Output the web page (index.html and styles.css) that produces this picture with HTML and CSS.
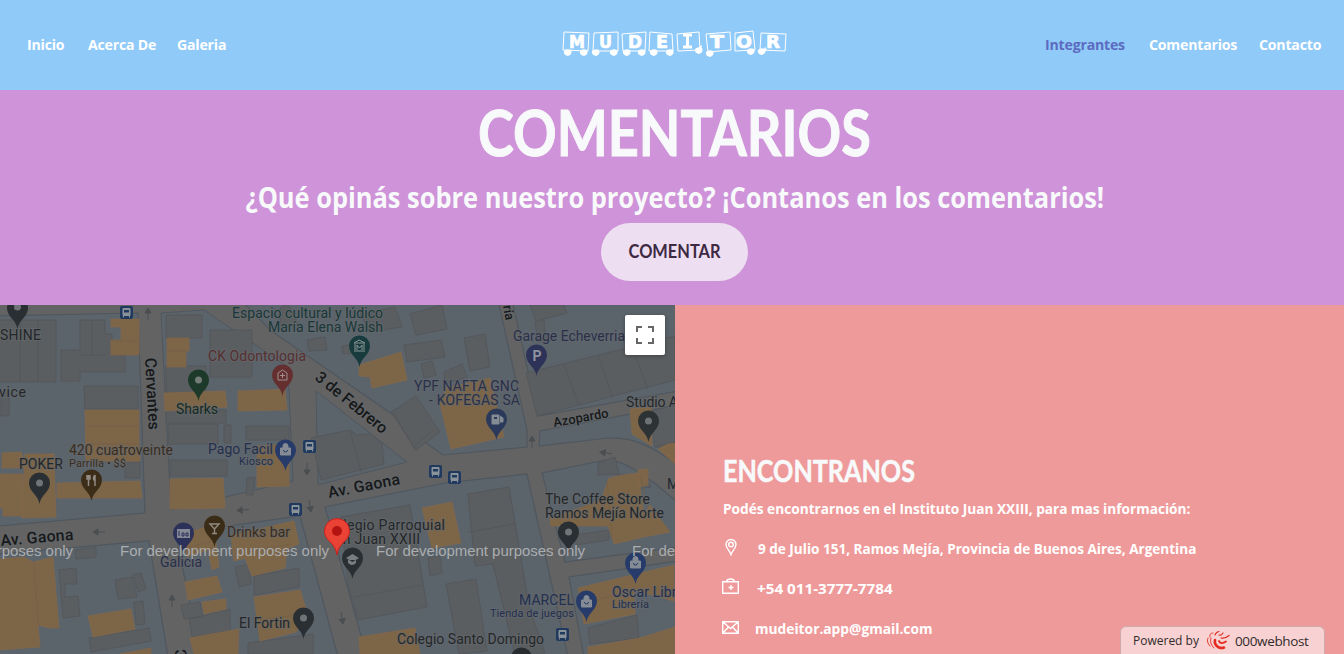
FILE: index.html
```html
<!DOCTYPE html>
<html lang="es">
<head>
<meta charset="utf-8">
<title>Mudeitor</title>
<link rel="stylesheet" href="styles.css">
</head>
<body>
<header class="header">
  <nav class="nav"><a class="w-inicio">Inicio</a><a class="w-acerca">Acerca De</a><a class="w-galeria">Galeria</a></nav>
  <svg class="logo" width="226" height="30" viewBox="562 28 226 30" fill="none" stroke="#fff">
    <path d="M564 32L589 33L588 51L563 50ZM594 33L618 32L618 51L593 51ZM622 34L646 32L645 51L623 51ZM650 32L672 34L673 51L649 51ZM677 34L699 32L700 50L678 51ZM706 34L730 32L731 50L708 52ZM735 33L753 31L755 50L735 51ZM761 33L786 34L785 51L760 50Z"/>
    <g fill="#fff" stroke="none">
      <path id="wheel" d="M564 51Q567 48 571 50Q573 54 568 56Q563 55 564 51Z"/>
      <use href="#wheel" x="16"/><use href="#wheel" x="28"/><use href="#wheel" x="46"/><use href="#wheel" x="59"/><use href="#wheel" x="74"/><use href="#wheel" x="86"/><use href="#wheel" x="102"/><use href="#wheel" x="131" y="-2"/><use href="#wheel" x="142" y="1"/><use href="#wheel" x="183" y="-1"/><use href="#wheel" x="194" y="-1"/>
      <path d="M699 47L702 45L701 50ZM763 51L765 47L767 50Z"/>
    </g>
    <g class="logo-letters">
      <text x="569" y="48" textLength="16" lengthAdjust="spacingAndGlyphs">M</text><text x="599" y="48" textLength="13" lengthAdjust="spacingAndGlyphs">U</text><text x="628" y="48" textLength="14" lengthAdjust="spacingAndGlyphs">D</text><text x="656" y="48" textLength="12" lengthAdjust="spacingAndGlyphs">E</text>
      <path d="M683 35H692M683 47H692M687.500 35V47" stroke-width="3"/>
      <text x="710" y="48" textLength="14" lengthAdjust="spacingAndGlyphs">T</text><text x="736" y="48" textLength="16" lengthAdjust="spacingAndGlyphs">O</text><text x="766" y="48" textLength="14" lengthAdjust="spacingAndGlyphs">R</text>
    </g>
  </svg>
  <nav class="nav nav-right"><a class="active w-integrantes">Integrantes</a><a class="w-comentarios">Comentarios</a><a class="w-contacto">Contacto</a></nav>
</header>

<section class="comments">
  <h1><span>COMENTARIOS</span></h1>
  <h2><span>¿Qué opinás sobre nuestro proyecto? ¡Contanos en los comentarios!</span></h2>
  <button class="comment-button"><span>COMENTAR</span></button>
</section>

<main class="location">
  <div class="map">
    <svg width="675" height="349" viewBox="0 305 675 349">
      <defs>
        <path id="pin" d="M.5 21C-.5 12-10 9-10 0A10.300 10.300 0 0 1 11 0C11 9 1.500 12 .5 21Z"/>
        <g id="bus"><rect x="-6.500" y="-6.500" width="13" height="13" rx="2" fill="#20395f"/><path d="M-3.500-4H3.500V3H-3.500ZM-3 3V5M3 3V5" fill="#899199" stroke="#899199"/><path d="M-2.500-2.500H2.500V0H-2.500Z" fill="#20395f"/></g>
        <path id="arrow" d="M0 6V-1M-3-1H3L0-6Z" fill="#4b4e51" stroke="#4b4e51"/>
        <g id="bag"><path d="M-5-1H5V6H-5ZM-2.500-1V-3A2.500 2.500 0 0 1 2.500-3V-1" fill="#858b94" stroke="#858b94" stroke-width="1"/><path d="M-2 1A2 2 0 0 0 2 1" fill="none" stroke="#263b69"/></g>
      </defs>
      <rect y="305" width="675" height="349" fill="#5b636b"/>
      <g class="road">
        <path d="M-2 302H243L270 330L392 414L425 442L443 455L527 447L527 430L498 300H512L538 416L678 391V405L540 431L539 446L608 438Q642 436 678 466V503Q628 458 605 460L542 473L565 562L678 547V561L569 577L584 657H568L527 474L445 483L325 507L367 657H338L300 516L220 527L176 536L201 657H168L149 541L-2 554V526L145 513L138 313L-2 316Z"/>
      </g>
      <g class="land">
        <path d="M161 313L204 310L288 367L293 481L171 510ZM316 391L407 462L318 485ZM678 448Q665 441 655 434L678 439Z"/>
      </g>
      <g class="gray">
        <path d="M-1 320H56V382H-1ZM20 320V382M38 320V382M61 350H80V320H105V334H112V355H125V372H80V381H61ZM80 355H105M92 320V354M84 386H138V409H85ZM1 393H9V416H1ZM166 315H202V338H166ZM166 366H206V393H166ZM210 330H252V377H210ZM166 410H226V423H166ZM168 424H218V444H169ZM170 460H227V476H170ZM224 425H231V443H224ZM246 426H289V440H246ZM125 462H140V478H125Z"/>
        <path d="M307 340L325 337L327 350L309 351ZM342 346L354 344L356 353L343 354ZM280 308L288 304L298 324L280 329ZM360 314L395 307L402 327L370 332ZM410 314L442 305L447 329L416 335ZM404 345L441 340L445 357L407 362ZM421 364L432 361L436 375L424 378ZM464 338L485 334L490 367L470 371ZM444 372L462 364L467 377L445 384ZM391 412L416 396L440 432L416 450ZM415 446L434 429M394 413L415 450M311 438L350 430L357 435L370 434L382 443L384 464L321 480ZM350 430L361 472M530 305H564L567 313L536 321ZM535 322L544 320L546 340L538 342ZM526 373L675 336V380L537 416ZM564 364L579 406M598 356L613 398M632 347L648 389M650 412L675 405V447L655 447Z"/>
        <path d="M468 494L509 487L529 606L545 653H525L514 651L493 564L475 566ZM469 532L515 524M341 517L410 505L427 607L358 620L348 585ZM354 597L422 585M446 584L476 579L487 651L459 654ZM575 535L609 530V540L576 545ZM598 463L615 457L619 474L598 475ZM655 447L675 442M617 475L645 474L651 487L619 491ZM75 550L96 547V557L76 559ZM59 570L76 568L77 584H65V597L78 596L80 616L63 618ZM115 580L132 577L137 597L118 599ZM133 575L141 573L146 589L138 592ZM134 602L143 601L145 624L136 625ZM89 638L149 628L151 641L91 652ZM181 605L200 602L203 617L184 619ZM189 619L230 609V631L192 637ZM254 576L299 568V587L254 595ZM248 643L313 634V654H248ZM588 628L637 615L639 638L590 644ZM247 478L255 477L253 495L246 495ZM235 567L249 564L251 584L239 587ZM428 558L440 556L442 573L430 576Z"/>
      </g>
      <g class="orange">
        <path d="M111 319H139V355H111V340H121V327H111ZM167 338H189V351H186V367H167ZM164 393L225 391L227 407L165 411ZM85 410H139V461H86ZM238 391L285 389L287 410L238 411ZM359 365L401 352L407 380L372 388L370 377L359 376ZM2 453L21 452L24 459L54 454V468H2ZM0 474H23V516H3V508H0ZM25 454H54L56 517L22 518ZM57 483L140 481L142 498H57ZM125 454H140V461H125ZM170 479L223 478L225 508L170 509ZM257 446L289 444L289 486L257 487ZM0 559L24 557L33 562L53 557L59 628H49L38 625L40 647L0 650ZM88 616L131 609L135 629L93 637ZM185 582L217 576L222 592L188 600ZM184 534L203 528L214 526L219 567L212 570L208 550L187 557ZM202 602L226 599V609L204 614ZM190 638L239 629L238 654H194ZM231 535L294 521L299 544L287 549L285 568L252 576L245 558L234 561ZM254 597L300 590L308 615L296 632L260 641ZM120 654L151 648V654ZM446 388L490 378L504 437L451 449L440 404ZM668 444L675 443V464L658 449ZM630 409L651 407L652 446L632 434ZM638 470L648 469V485L638 487ZM422 508L452 502L461 543L432 548ZM550 519L601 500L609 478L623 475L638 473L644 514L650 505L670 532L644 537L614 544L608 526L551 526ZM578 588L674 565V601L634 590L635 614L584 624ZM588 647L640 638L675 627V654H588ZM359 637L415 628L420 654H360ZM660 448L675 446V461Z"/>
        <path class="seams" d="M112 341H139M167 351H187M86 426H139M86 444H139M190 547L216 540M241 553L291 544M259 620L303 614M34 562L38 625M607 481L612 540M640 475L648 507M583 604L629 591"/>
      </g>
      <g class="labels">
        <text x="0" y="340" textLength="41">SHINE</text><text x="-1" y="397" textLength="27">vice</text>
        <text x="176" y="414" textLength="42" fill="#152b22">Sharks</text>
        <g fill="#1a3837"><text x="232" y="318" textLength="151">Espacio cultural y lúdico</text><text x="268" y="332" textLength="115">María Elena Walsh</text></g>
        <text x="208" y="361" textLength="98" fill="#572f31">CK Odontologia</text>
        <g fill="#2a304a"><text x="513" y="341" textLength="112">Garage Echeverria</text><text x="414" y="391" textLength="105">YPF NAFTA GNC</text><text x="429" y="405" textLength="91">- KOFEGAS SA</text><text x="160" y="567" textLength="42">Galicia</text></g>
        <g fill="#232f4e"><text x="208" y="454" textLength="65">Pago Facil</text><text class="small" x="239" y="465" textLength="34">Kiosco</text><text x="519" y="605" textLength="55">MARCEL</text><text class="small" x="490" y="617" textLength="84">Tienda de juegos</text><text x="612" y="597" textLength="72">Oscar Libre</text><text class="small" x="612" y="608" textLength="37">Librería</text></g>
        <g fill="#3a2d20"><text x="69" y="455" textLength="104">420 cuatroveinte</text><text class="small" x="69" y="467" textLength="57">Parrilla • $$</text><text x="227" y="537" textLength="63">Drinks bar</text></g>
        <text x="19" y="469" textLength="44">POKER</text><text x="626" y="407" textLength="52">Studio A</text><text x="545" y="504" textLength="105">The Coffee Store</text><text x="545" y="518" textLength="119">Ramos Mejía Norte</text><text x="667" y="489">M</text><text x="335" y="530" textLength="110">olegio Parroquial</text><text x="335" y="544" textLength="85">an Juan XXIII</text><text x="239" y="628" textLength="51">El Fortin</text><text x="397" y="644" textLength="147">Colegio Santo Domingo</text>
        <g class="street"><text transform="translate(145 358) rotate(87)" textLength="72">Cervantes</text><text transform="translate(314 379) rotate(39)" textLength="88">3 de Febrero</text><text transform="translate(554 427) rotate(-10)" textLength="56" font-size="13">Azopardo</text><text transform="translate(1 546) rotate(-5)" textLength="73">Av. Gaona</text><text transform="translate(329 498) rotate(-11)" textLength="73">Av. Gaona</text><text transform="translate(503 306) rotate(80)" textLength="15" font-size="13">ría</text><text transform="translate(187 659) rotate(-96)">C</text></g>
      </g>
      <use href="#pin" x="17" y="308" fill="#292f32"/><circle cx="17.500" cy="307" r="3.500" fill="#707476"/>
      <use href="#pin" x="198" y="380" fill="#1c3929"/><circle cx="198.500" cy="380" r="3.500" fill="#757b78"/>
      <use href="#pin" x="359" y="346" fill="#183c3e"/><path d="M354 343L359 340L365 343ZM354 351H365M355 344V350M364 344V350M357 350V345L359.500 348L362 345V350" fill="none" stroke="#8a9494"/>
      <use href="#pin" x="282" y="375" fill="#642f2e"/><path d="M278 373V380H287V373L282.500 370ZM282.500 373V378M280 375.500H285" fill="none" stroke="#a09090"/>
      <use href="#pin" x="285" y="450" fill="#263b69"/><use href="#bag" x="285.500" y="449"/>
      <use href="#pin" x="536" y="355" fill="#2d3358"/><text class="parking" x="532.500" y="361">P</text>
      <use href="#pin" x="496" y="419" fill="#2b3a5b"/><path d="M492 415H499V424H492ZM500 416L503 418V422H500" fill="#848b93" stroke="#848b93"/><path d="M494 417H497V419H494Z" fill="#2b3a5b"/>
      <use href="#pin" x="648" y="421" fill="#2d3234"/><circle cx="648.500" cy="421" r="3.500" fill="#6e7274"/>
      <use href="#pin" x="39" y="483" fill="#292f32"/><circle cx="39.500" cy="483" r="3.500" fill="#707476"/>
      <use href="#pin" x="91" y="480" fill="#3c2d19"/><path d="M87 475V479H90V475M88.500 475V486M95 475V486M95 475Q92 479 95 481" fill="none" stroke="#918b83" stroke-width="1.500"/>
      <use href="#pin" x="183" y="533" fill="#2b3158"/><rect x="177" y="529" width="13" height="9" fill="#858995"/><path d="M179 531V536M182 533H184V536H182ZM186 533H188V536H186Z" fill="none" stroke="#2b3158"/>
      <use href="#pin" x="214" y="526" fill="#3b2c17"/><path d="M210 524H219L214.500 529ZM214.500 529V533M212 533.500H217" fill="none" stroke="#928b80" stroke-width="1.400"/>
      <use href="#pin" x="352" y="558" fill="#292f32"/><path d="M346 558L352.500 554L359 558L352.500 562ZM348 560V563Q352 567 356 563V560" fill="#797d80"/>
      <use href="#pin" x="303" y="618" fill="#292f32"/><circle cx="303.500" cy="618" r="3.500" fill="#707476"/>
      <use href="#pin" x="568" y="532" fill="#292f32"/><circle cx="568.500" cy="532" r="3.500" fill="#707476"/>
      <use href="#pin" x="586" y="601" fill="#263b69"/><use href="#bag" x="586.500" y="601"/>
      <use href="#pin" x="635" y="563" fill="#263b69"/><use href="#bag" x="635.500" y="562"/>
      <use href="#pin" x="521" y="658" fill="#292c2e"/>
      <use href="#bus" x="126.500" y="312.500"/><use href="#bus" x="309.500" y="446.500"/><use href="#bus" x="295.500" y="509.500"/><use href="#bus" x="435.500" y="471.500"/><use href="#bus" x="454.500" y="477.500"/><use href="#bus" x="562.500" y="634.500"/>
      <use href="#arrow" x="148" y="314"/><use href="#arrow" x="532" y="442"/><use href="#arrow" x="172" y="601"/>
      <use href="#arrow" transform="translate(307 469) rotate(180)"/><use href="#arrow" transform="translate(310 506) rotate(170)"/><use href="#arrow" transform="translate(342 618) rotate(170)"/><use href="#arrow" transform="translate(99 532) rotate(-90)"/><use href="#arrow" transform="translate(243 510) rotate(-95)"/><use href="#arrow" transform="translate(606 453) rotate(-82)"/>
      <path d="M337 555C335 541 324.500 542 324.500 531A12.500 12.500 0 0 1 349.500 531C349.500 542 339 541 337 555Z" fill="#ea4335" stroke="#c5221f"/><circle cx="337" cy="531" r="5" fill="#b31412"/>
      <g class="notice"><text x="-136" y="556" textLength="209">For development purposes only</text><text x="120" y="556" textLength="209">For development purposes only</text><text x="376" y="556" textLength="209">For development purposes only</text><text x="632" y="556" textLength="209">For development purposes only</text></g>
    </svg>
    <button class="fullscreen" aria-label="Pantalla completa"><svg width="18" height="18" viewBox="0 0 18 18" fill="none" stroke="#666" stroke-width="2"><path d="M1 6V1H6M12 1H17V6M17 12V17H12M6 17H1V12"/></svg></button>
  </div>
  <section class="contact">
    <h3><span>ENCONTRANOS</span></h3>
    <p><span class="intro">Podés encontrarnos en el Instituto Juan XXIII, para mas información:</span></p>
    <p><svg class="icon" width="18" height="18" viewBox="0 0 18 18"><path d="M9 16.500C8 13 4 10.500 4 6.500A5 5 0 0 1 14 6.500C14 10.500 10 13 9 16.500Z"/><circle cx="9" cy="6.500" r="2.300"/></svg><span class="address">9 de Julio 151, Ramos Mejía, Provincia de Buenos Aires, Argentina</span></p>
    <p><svg class="icon" width="18" height="18" viewBox="0 0 18 18"><path d="M.7 3.700H16.300V15.300H.7ZM4.500 3.500Q5 1 8.500 1T12.500 3.500M9 7V12M6.500 9.500H11.500"/></svg><span class="phone">+54 011-3777-7784</span></p>
    <p><svg class="icon" width="18" height="18" viewBox="0 0 18 18"><path d="M.7 3.700H16.300V15.300H.7ZM.7 3.700L8.500 10.500L16.300 3.700M.7 15.300L6.500 9M16.300 15.300L10.500 9"/></svg><span class="email">mudeitor.app@gmail.com</span></p>
  </section>
</main>

<a class="host-badge"><span>Powered by</span>
  <svg width="25" height="21" viewBox="0 0 25 21" fill="none" stroke="#e32b20" stroke-linecap="round"><path d="M7 3Q3 3 4 7M2 8Q0 12 4 16M5 8Q3 13 8 18" stroke-width=".9"/><path d="M9 10Q8 15 13 17.500Q16 18.500 18 17.500" stroke-width="2.600"/><path d="M13 11Q15 15 20 11.500" stroke-width="1.800"/><path d="M15 8Q19 9 23 5.500M13 5Q15 6 17 3M9 5Q10 2 13 1.500" stroke-width="1.200"/></svg>
  <span class="host-name">000webhost</span></a>
</body>
</html>
```
FILE: styles.css
```css
* { box-sizing: border-box; }
body { margin: 0; height: 654px; overflow: hidden; font-family: "Open Sans", "Noto Sans", sans-serif; color: #f8f9fa; }
.header { display: flex; justify-content: space-between; align-items: center; height: 90px; padding: 0 22px 2px 27px; background: #90caf9; }
.nav { display: flex; gap: 22px; width: 455px; font-size: 15px; font-weight: 700; letter-spacing: -.2px; line-height: 24px; color: #fff; }
.nav a { white-space: nowrap; transform: scaleX(.94); transform-origin: left; }
.nav-right { justify-content: flex-end; }
.nav .active { color: #5c6bc0; }
.w-inicio { width: 39px; }
.w-acerca { width: 67px; }
.w-galeria { width: 49px; }
.w-integrantes { width: 82px; }
.w-comentarios { width: 88px; }
.w-contacto { width: 63px; }
.logo { margin-bottom: 2px; }
.logo-letters { font: 700 18px "DejaVu Sans", sans-serif; }
.logo-letters text { fill: #fff; stroke: #fff; stroke-width: .7px; }
.comments { display: flex; flex-direction: column; align-items: center; height: 215px; padding-left: 5px; background: #ce93d8; }
h1, h2, h3, p { margin: 0; white-space: nowrap; }
h1 span, h2 span, h3 span, p span { display: inline-block; }
h1 { padding-top: 2px; font: 700 64px/80px Lato, sans-serif; }
h1 span { transform: scaleX(.845); -webkit-text-stroke: 1px #f8f9fa; }
h2 { margin-top: 7px; font-size: 28px; line-height: 36px; font-weight: 700; }
h2 span { transform: scaleX(.908); }
.comment-button { width: 147px; height: 58px; margin-top: 8px; padding: 0 0 2px; border: 0; border-radius: 29px; background: #eedef1; color: #3e2942; font: 700 18px Lato, sans-serif; }
.comment-button span { display: inline-block; transform: scaleX(.91); }
.location { display: grid; grid-template-columns: 675px 1fr; height: 349px; }
.map { position: relative; overflow: hidden; }
.map > svg { display: block; }
.road { fill: #636363; stroke: #50575e; stroke-width: 1.2; }
.land { fill: #5b636b; stroke: #50575e; }
.gray { fill: #5b5e60; stroke: #535659; stroke-width: .8; }
.orange { fill: #7d6548; stroke: #84694b; stroke-width: .7; }
.seams { stroke: #736047; }
.labels { font: 14px Roboto, sans-serif; fill: #242729; }
.labels text { stroke: rgba(100, 105, 109, .65); stroke-width: 2px; paint-order: stroke; }
.labels .small { font-size: 11px; }
.labels .street { font-size: 16px; font-weight: 500; fill: #17191a; }
.parking { font: 700 14px Roboto, sans-serif; fill: #8d91a0; }
.notice { font: 15px "Liberation Sans", sans-serif; fill: #aaadaf; }
.fullscreen { position: absolute; top: 10px; right: 10px; width: 40px; height: 40px; display: grid; place-items: center; border: 0; border-radius: 2px; background: #fff; box-shadow: 0 1px 4px rgba(0,0,0,.3); }
.contact { padding: 144px 0 0 48px; background: #ef9a9a; }
h3 { height: 39px; font: 700 30px/42px Lato, sans-serif; }
h3 span { transform: scaleX(.838); transform-origin: left; -webkit-text-stroke: .5px #f8f9fa; }
.contact p { display: flex; align-items: center; height: 40px; font-size: 15px; line-height: 24px; font-weight: 700; color: #fff; }
.contact p span { transform-origin: left; }
.icon { flex: none; width: 18px; margin: -3px 16px 0 -1px; fill: none; stroke: #fff; stroke-width: 1.4; }
.contact .intro { transform: scaleX(.911); }
.contact .address { margin-left: 2px; transform: scaleX(.903); }
.contact .phone { margin-left: 1px; transform: scaleX(1.015); }
.contact .email { margin-left: -1px; transform: scaleX(.918); }
.host-badge { position: fixed; right: 19px; bottom: 0; display: flex; align-items: center; width: 205px; height: 28px; padding-left: 12px; border: 1px solid #cfaaaa; border-bottom: 0; border-radius: 6px 6px 0 0; background: #f8d2d2; color: #302b2b; font: 12px "Open Sans", sans-serif; white-space: nowrap; }
.host-badge svg { margin: 0 4px 0 7px; }
.host-name { font-size: 13.5px; font-weight: 500; letter-spacing: -.35px; }
```
